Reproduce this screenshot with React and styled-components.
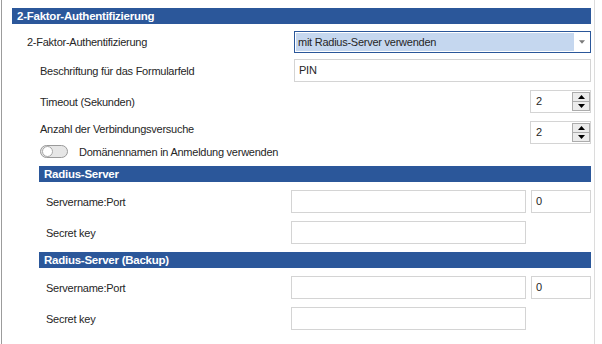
import React from 'react'
import styled, { createGlobalStyle } from 'styled-components'

const GlobalStyle = createGlobalStyle`
    html, body {
        margin: 0;
        padding: 0;
        background: #ffffff;
    }
    body {
        font-family: "Liberation Sans", Arial, sans-serif;
        font-size: 11px;
        letter-spacing: -0.25px;
        color: #262626;
    }
`

const Page = styled.div`
    width: 602px;
    height: 344px;
    overflow: hidden;
    background: #fff;
`

const Panel = styled.div`
    margin-left: 1px;
    width: 594px;
    height: 344px;
    box-sizing: border-box;
    border-left: 1px solid #9c9c9c;
    border-right: 1px solid #dcdcdc;
    padding: 8px 3px 0 10px;
    display: flex;
    flex-direction: column;
`

const SectionHeader = styled.div`
    height: 16px;
    line-height: 16px;
    margin-top: ${p => p.$top || 0}px;
    margin-left: ${p => p.$indent || 0}px;
    padding-left: 5px;
    background: #2b579a;
    color: #fff;
    font-weight: bold;
    font-size: 11.5px;
    white-space: nowrap;
`

const Row = styled.div`
    display: flex;
    align-items: center;
    justify-content: space-between;
    height: ${p => p.$height || 23}px;
    margin-top: ${p => p.$top || 0}px;
`

const Label = styled.span`
    padding-left: ${p => p.$indent || 0}px;
    margin-top: ${p => p.$shift || 0}px;
    white-space: nowrap;
`

const Controls = styled.div`
    display: flex;
    gap: 5px;
    height: 100%;
`

const Select = styled.div`
    width: 297px;
    height: 22px;
    box-sizing: border-box;
    border: 1px solid #2b579a;
    padding: 1px;
    display: flex;
    align-items: stretch;
`

const SelectValue = styled.div`
    width: 276px;
    background: #c5d7ef;
    padding-left: 2px;
    line-height: 18px;
    white-space: nowrap;
`

const SelectArrow = styled.div`
    flex: 1;
    display: flex;
    align-items: center;
    justify-content: center;
    svg { display: block; }
`

const TextBox = styled.div`
    width: ${p => p.$width}px;
    height: 23px;
    box-sizing: border-box;
    border: 1px solid #d4d4d4;
    padding-left: 4px;
    line-height: 21px;
    color: #262626;
`

const Spinner = styled.div`
    width: 61px;
    height: 23px;
    box-sizing: border-box;
    border: 1px solid #d4d4d4;
    display: flex;
    justify-content: space-between;
    padding: 1px 0 1px 5px;
`

const SpinValue = styled.span`
    line-height: 19px;
`

const SpinButtons = styled.div`
    width: 18px;
    display: flex;
    flex-direction: column;
`

const SpinButton = styled.div`
    flex: 1;
    box-sizing: border-box;
    border: 1px solid #acacac;
    background: #ececec;
    display: flex;
    align-items: center;
    justify-content: center;
    & + & { border-top: none; }
    svg { display: block; }
`

const ToggleRow = styled.div`
    display: flex;
    align-items: center;
    gap: 11px;
    height: 13px;
    margin-top: 1px;
    padding-left: 28px;
`

const Toggle = styled.div`
    width: 28px;
    height: 13px;
    box-sizing: border-box;
    border: 1px solid #9a9a9a;
    border-radius: 7px;
    background: #e6e6e6;
    display: flex;
    align-items: center;
    padding-left: 1px;
`

const Knob = styled.div`
    width: 11px;
    height: 11px;
    box-sizing: border-box;
    border-radius: 50%;
    background: #ffffff;
    border: 1px solid #a8a8a8;
`

const Triangle = ({ up, color = '#000', w = 7 }) => (
    <svg width={w} height="4" viewBox="0 0 7 4">
        {up
            ? <polygon points="3.5,0 7,4 0,4" fill={color} />
            : <polygon points="0,0 7,0 3.5,4" fill={color} />}
    </svg>
)

function NumberSpinner({ value }) {
    return (
        <Spinner>
            <SpinValue>{value}</SpinValue>
            <SpinButtons>
                <SpinButton><Triangle up /></SpinButton>
                <SpinButton><Triangle /></SpinButton>
            </SpinButtons>
        </Spinner>
    )
}

function RadiusSection({ title }) {
    return (
        <>
            <SectionHeader $top={8} $indent={27}>{title}</SectionHeader>
            <Row $top={8}>
                <Label $indent={34}>Servername:Port</Label>
                <Controls>
                    <TextBox $width={235} />
                    <TextBox $width={60}>0</TextBox>
                </Controls>
            </Row>
            <Row $top={8}>
                <Label $indent={34}>Secret key</Label>
                <Controls>
                    <TextBox $width={235} />
                    <div style={{ width: 60 }} />
                </Controls>
            </Row>
        </>
    )
}

function App() {
    return (
        <Page>
            <GlobalStyle />
            <Panel>
                <SectionHeader>2-Faktor-Authentifizierung</SectionHeader>
                <Row $top={7} $height={22}>
                    <Label $indent={15}>2-Faktor-Authentifizierung</Label>
                    <Select>
                        <SelectValue>mit Radius-Server verwenden</SelectValue>
                        <SelectArrow><Triangle color="#7a7a7a" w={6} /></SelectArrow>
                    </Select>
                </Row>
                <Row $top={6}>
                    <Label $indent={28}>Beschriftung für das Formularfeld</Label>
                    <TextBox $width={297}>PIN</TextBox>
                </Row>
                <Row $top={8}>
                    <Label $indent={28}>Timeout (Sekunden)</Label>
                    <NumberSpinner value="2" />
                </Row>
                <Row $top={8}>
                    <Label $indent={28} $shift={-8}>Anzahl der Verbindungsversuche</Label>
                    <NumberSpinner value="2" />
                </Row>
                <ToggleRow>
                    <Toggle><Knob /></Toggle>
                    <span>Domänennamen in Anmeldung verwenden</span>
                </ToggleRow>
                <RadiusSection title="Radius-Server" />
                <RadiusSection title="Radius-Server (Backup)" />
            </Panel>
        </Page>
    )
}

export default App
